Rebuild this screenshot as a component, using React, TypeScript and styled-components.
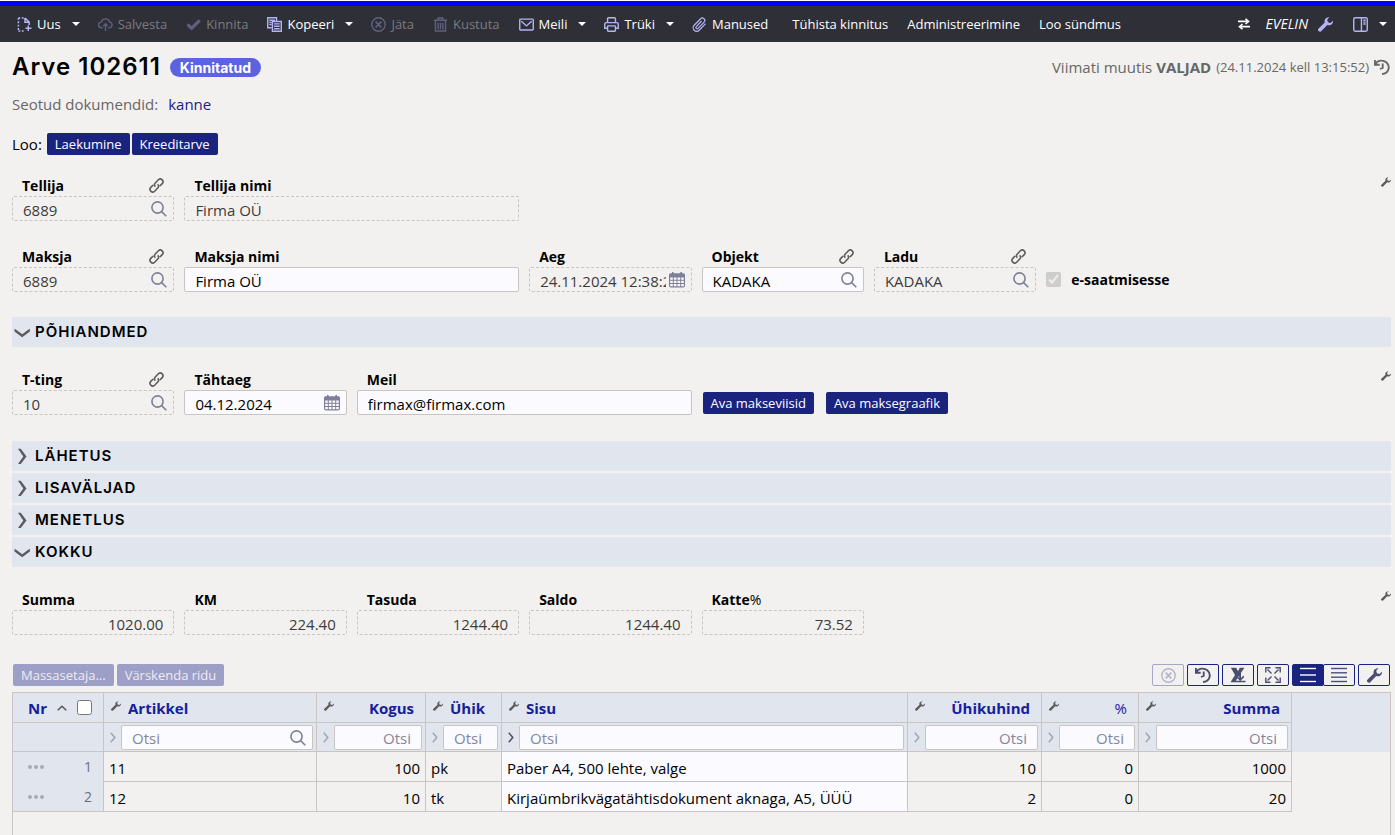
import React, { ReactNode, useId } from 'react';
import styled, { createGlobalStyle, css } from 'styled-components';

const color = {
  page: '#f3f1ef',
  bar: '#2e2f37',
  navy: '#1a237e',
  band: '#e1e5ee',
  line: '#c8c5c3',
  field: '#fbfaff',
  muted: '#676767',
  icon: '#7d8097',
  lilac: '#b3b4f5',
};

const GlobalStyle = createGlobalStyle`
  * { box-sizing: border-box; }
  body {
    margin: 0;
    background: ${color.page};
    color: #000;
    font-family: "Open Sans", "Noto Sans", sans-serif;
    font-size: 15px;
    line-height: 20px;
  }
  button, input { font: inherit; }
  svg { display: block; flex: none; }
`;

/* ---------- icons ---------- */

type IconProps = { size?: number; stroke?: number; children?: ReactNode };

const Glyph = ({ size = 15, stroke = 1.3, children }: IconProps) => (
  <svg
    width={size}
    height={size}
    viewBox="0 0 16 16"
    fill="none"
    stroke="currentColor"
    strokeWidth={stroke}
    aria-hidden="true"
  >
    {children}
  </svg>
);

const NewIcon = () => (
  <Glyph stroke={1.6}>
    <path d="M1.500 1v14M1.500 1h7M1.500 15h6" strokeDasharray="2 1.600" />
    <path d="M8.500 1v4.500H13M8.500 1l4.500 4.500v3M12 9v6M9 12h6.500" />
  </Glyph>
);
const CloudIcon = () => (
  <Glyph stroke={1.5}>
    <path d="M5 11.500H3.800a3 3 0 0 1-.4-6A4.800 4.800 0 0 1 12.600 5.400a3.100 3.100 0 0 1-.3 6.100H11M8 15V7.500M5.500 9.800 8 7.300l2.500 2.500" />
  </Glyph>
);
const CheckIcon = () => (
  <Glyph stroke={3.4}>
    <path d="M1.500 7.800 6 12 14.700 3.500" />
  </Glyph>
);
const CopyIcon = () => (
  <Glyph stroke={1.5}>
    <path d="M5 11.500H.8V.8h9.400v3.400M2.500 3.500h6M2.500 5.700H5M2.500 8H5" />
    <path d="M5.800 4.800h9.400v10.400H5.800zM7.500 7.300h6M7.500 9.900h6M7.500 12.500h6" />
  </Glyph>
);
const CancelIcon = () => (
  <Glyph stroke={1.5}>
    <circle cx="8" cy="8" r="7.200" />
    <path d="m5 5 6 6M11 5l-6 6" strokeWidth="1.900" />
  </Glyph>
);
const TrashIcon = () => (
  <Glyph stroke={1.5}>
    <path d="M1 3.500h14M5.500 3.300V1h5v2.300M2.600 3.800V15h10.800V3.800M5.500 6v7M8 6v7M10.500 6v7" />
  </Glyph>
);
const MailIcon = () => (
  <Glyph stroke={1.5}>
    <rect x=".8" y="2.300" width="14.400" height="11.600" rx=".8" />
    <path d="m2.500 4.500 5.500 5 5.500-5" />
  </Glyph>
);
const PrintIcon = () => (
  <Glyph stroke={1.5}>
    <path d="M3.800 6V1.800q0-1 1-1h6.400q1 0 1 1V6M3.500 12H.8V7.500Q.8 6 2.300 6h11.400q1.500 0 1.500 1.500V12h-2.700" />
    <rect x="3.800" y="9.500" width="8.400" height="5.700" rx=".8" />
  </Glyph>
);
const ClipIcon = () => (
  <Glyph>
    <path d="m10.200 4.300-5.600 5.900a1.300 1.300 0 0 0 1.900 1.900l6.400-6.700a2.500 2.500 0 0 0-3.700-3.500L2.300 8.800a3.700 3.700 0 0 0 5.400 5.300l6.700-7.100" />
  </Glyph>
);
const SwapIcon = () => (
  <Glyph size={12} stroke={2.2}>
    <path d="M0 4.500h13M10 1l4 3.500L10 8M16 11.500H3M6 8l-4 3.500L6 15" />
  </Glyph>
);
const WrenchIcon = ({ size = 15 }: { size?: number }) => (
  <svg width={size} height={size} viewBox="0 0 16 16" fill="currentColor" aria-hidden="true">
    <path d="M12.200 0 10 .6a4.300 4.300 0 0 0-2.800 5.300L.6 12.200a1.900 1.900 0 0 0 0 2.700 2 2 0 0 0 2.800.2l6.500-6.600a4.400 4.400 0 0 0 6.100-4.600l-2.700 2.400-2.700-.8-.8-2.600z" />
  </svg>
);
const PanelIcon = () => (
  <Glyph stroke={1.5}>
    <rect x=".8" y=".8" width="14.400" height="14.400" rx="1.500" />
    <path d="M9 1v14M11 3.500h2.500M11 5.500h2.500M11 7.500h2.500" />
  </Glyph>
);
const HistoryIcon = ({ size = 16 }: { size?: number }) => (
  <Glyph size={size} stroke={1.9}>
    <path d="M.9 1v4.800h4.800M1.200 5.300C3.500 1 9 .6 12.300 3.300c4.500 4 2.500 11.500-4.300 11.700M8.700 4.500v4.300L6 10" />
  </Glyph>
);
const LinkIcon = () => (
  <Glyph stroke={1.7}>
    <path d="M6.700 9.300a2.900 2.900 0 0 1 0-4l3.300-3.400a2.900 2.900 0 0 1 4.100 4.100L11.600 8.600M9.300 6.700a2.900 2.900 0 0 1 0 4L6 14.100A2.900 2.900 0 0 1 1.900 10l2.500-2.600" />
  </Glyph>
);
const SearchIcon = () => (
  <Glyph size={16} stroke={1.6}>
    <circle cx="6.500" cy="6.500" r="5.600" />
    <path d="m10.600 10.600 4.700 4.700" />
  </Glyph>
);
const CalendarIcon = () => (
  <svg width="16" height="16" viewBox="0 0 16 16" aria-hidden="true">
    <path fill="currentColor" d="M3 0h1.600v1.300h6.800V0H13v1.300h1.500Q16 1.300 16 2.800v11q0 1.700-1.700 1.700H1.700Q0 15.500 0 13.800v-11q0-1.500 1.500-1.500H3z" />
    <path
      fill={color.field}
      d="M1.200 5.500h2.600v2.300H1.200zM4.800 5.500h2.700v2.300H4.800zM8.500 5.500h2.700v2.300H8.500zM12.200 5.500h2.600v2.300h-2.600zM1.200 8.700h2.600v2.300H1.200zM4.800 8.700h2.700v2.300H4.800zM8.500 8.700h2.700v2.300H8.500zM12.200 8.700h2.600v2.300h-2.600zM1.200 12h2.600v2.300H1.200zM4.800 12h2.700v2.300H4.800zM8.500 12h2.700v2.300H8.500zM12.200 12h2.600v2.300h-2.600z"
    />
  </svg>
);
const ExcelIcon = () => (
  <svg width="16" height="16" viewBox="0 0 16 16" fill="currentColor" aria-hidden="true">
    <path d="M.8.8h5.400L8 4.200 9.800.8h4.700L10.800 6v4.500L8.800 9l-3 4.700H7v1.500H.5L5 8z" />
    <path d="M9.300 6h1.700v5l2.200-2.200 1.200 1.200-4.200 4.100-3.400-3.300 1.200-1.200 1.300 1.300zM7 13.800h8.500v1.500H7z" />
  </svg>
);
const ExpandIcon = () => (
  <Glyph size={16} stroke={1.4}>
    <path d="M.8 5.500V.8h4.700M10.500.8h4.700v4.700M15.200 10.500v4.700h-4.700M5.500 15.200H.8v-4.700M2.500 2.500l4 4M13.500 2.500l-4 4M13.500 13.500l-4-4M2.500 13.500l4-4" />
  </Glyph>
);
const RowsIcon = ({ lines }: { lines: number[] }) => (
  <Glyph size={16} stroke={1.4}>
    {lines.map((y) => (
      <path key={y} d={`M0 ${y}h16`} />
    ))}
  </Glyph>
);
const CaretDown = () => (
  <svg width="8" height="4" viewBox="0 0 8 4" fill="currentColor" aria-hidden="true">
    <path d="M0 0h8L4 4z" />
  </svg>
);
const SortUp = () => (
  <svg width="10" height="6" viewBox="0 0 10 6" fill="none" stroke="#555" strokeWidth="1.500" aria-hidden="true">
    <path d="m.7 5.300 4.300-4 4.300 4" />
  </svg>
);
const FoldIcon = ({ open }: { open: boolean }) => (
  <svg width="16" height="16" viewBox="0 0 16 16" fill="#5a5a60" aria-hidden="true">
    {open ? (
      <path d="M.5 4.800 2.900 6.300 8.200 10.200l5.300-3.900 2.400-1.500v2.800L8.200 13.300.5 7.600z" />
    ) : (
      <path d="M4 .8h2.800L12.500 8.500l-5.700 7.500H4L9.300 8.500z" />
    )}
  </svg>
);
const SmallChevron = () => (
  <svg width="6" height="11" viewBox="0 0 6 11" fill="none" stroke="currentColor" strokeWidth="1.600" aria-hidden="true">
    <path d="M.8.7 4.800 5.500.8 10.300" />
  </svg>
);
const DotsIcon = () => (
  <svg width="16" height="4" viewBox="0 0 16 4" fill="#a9abb8" aria-hidden="true">
    <circle cx="2" cy="2" r="2" />
    <circle cx="8" cy="2" r="2" />
    <circle cx="14" cy="2" r="2" />
  </svg>
);

/* ---------- top bar ---------- */

const Page = styled.div`
  min-height: 100vh;
  display: flex;
  flex-direction: column;
  border-top: 1px solid #fff;
`;

const TopBar = styled.header`
  display: flex;
  justify-content: space-between;
  height: 41px;
  padding-left: 7px;
  border-top: 5px solid #00f;
  background: ${color.bar};
`;

const Menu = styled.nav`
  display: flex;
`;

const MenuButton = styled.button`
  display: flex;
  align-items: center;
  gap: 5px;
  padding: 0 9px 0 10px;
  border: 0;
  background: none;
  color: #fff;
  font-size: 13px;
  white-space: nowrap;

  svg { color: ${color.lilac}; }
  &:disabled { color: #7b7c80; }
  &:disabled svg { color: #5f607f; }
`;

const CaretButton = styled(MenuButton)`
  padding: 0 8px 0 2px;
  svg { color: #fff; }
`;

const SwapButton = styled(MenuButton)`
  padding: 0 7px;
  svg { color: #fff; }
`;

const UserButton = styled(MenuButton)`
  gap: 10px;
  padding: 0 10px 0 8px;
  font-size: 14px;
  font-style: italic;
`;

const TextMenu = styled.div`
  display: flex;
  margin-left: 5px;
`;

/* ---------- document heading ---------- */

const Content = styled.main`
  flex: 1;
  display: flex;
  flex-direction: column;
  padding: 0 4px 0 12px;
`;

const TitleRow = styled.div`
  display: flex;
  align-items: center;
  justify-content: space-between;
  height: 50px;
`;

const TitleGroup = styled.div`
  display: flex;
  align-items: center;
  gap: 9px;
`;

const Title = styled.h1`
  margin: 0;
  font: 600 24px/30px Inter, sans-serif;
  letter-spacing: 1px;
`;

const Badge = styled.span`
  padding: 0 10px;
  border-radius: 10px;
  background: #5c63e2;
  color: #fff;
  font: 700 14px/19px Inter, sans-serif;
`;

const Changed = styled.div`
  display: flex;
  align-items: center;
  gap: 5px;
  padding-right: 1px;
  color: ${color.muted};
`;

const Stamp = styled.span`
  font-size: 13px;
`;

const Related = styled.p`
  display: flex;
  gap: 10px;
  margin: 0;
  color: ${color.muted};
  line-height: 24px;

  a { color: ${color.navy}; text-decoration: none; }
`;

const CreateRow = styled.div`
  display: flex;
  align-items: center;
  gap: 2px;
  margin: 16px 0 19px;
  height: 23px;

  > span { margin-right: 3px; }
`;

const Action = styled.button`
  height: 22px;
  padding: 0 8px;
  border: 0;
  border-radius: 2px;
  background: ${color.navy};
  color: #fff;
  font-size: 13px;
  line-height: 22px;
  white-space: nowrap;

  &:disabled { background: #9e9fc6; color: #ececf4; }
`;

/* ---------- fields ---------- */

const Block = styled.section<{ $first?: boolean }>`
  display: flex;
  align-items: flex-start;
  padding: ${(p) => (p.$first ? '0 0 25px' : '21px 0 26px')};
`;

const FieldGrid = styled.div`
  flex: 1;
  display: grid;
  grid-template-columns: repeat(8, minmax(0, 1fr));
  gap: 24px 10px;
`;

const Tool = styled.button`
  display: flex;
  width: 10px;
  padding: 3px 0;
  border: 0;
  background: none;
  color: #5c5c5c;
`;

const FieldCell = styled.div<{ $span: number; $newLine?: boolean }>`
  grid-column: ${(p) => (p.$newLine ? '1 /' : '')} span ${(p) => p.$span};
`;

const FieldHead = styled.div`
  display: flex;
  align-items: center;
  justify-content: space-between;
  height: 22px;
  padding: 0 10px;
  color: #5c5c5c;

  label {
    padding-top: 2px;
    color: #000;
    font-size: 14px;
    font-weight: 700;
  }
  label span { font-weight: 400; }
`;

const boxed = css`
  width: 100%;
  height: 25px;
  padding: 2px 10px 0;
  border: 1px solid ${color.line};
  border-radius: 2px;
  background: ${color.field};
  color: #000;
  outline: 0;
`;

const InputWrap = styled.div`
  position: relative;
  flex: 1;
  min-width: 0;
  display: flex;

  > svg {
    position: absolute;
    right: 7px;
    top: 5px;
    color: ${color.icon};
  }
`;

const TextInput = styled.input<{ $right?: boolean; $icon?: boolean }>`
  ${boxed}
  text-align: ${(p) => (p.$right ? 'right' : 'left')};
  ${(p) => p.$icon && 'padding-right: 25px;'}

  &:read-only {
    border-style: dashed;
    background: transparent;
    color: #3c3c3c;
  }
  &::placeholder { color: #84869a; opacity: 1; }
`;

const CheckCell = styled.label`
  display: flex;
  align-items: center;
  gap: 10px;
  align-self: end;
  height: 25px;
  font-size: 14px;
  font-weight: 700;

  input { width: 15px; height: 15px; margin: 0; }
`;

const ActionCell = styled.div`
  display: flex;
  align-items: flex-end;
  gap: 12px;
  padding: 0 0 1px 1px;
  grid-column: span 3;
`;

type FieldProps = {
  label: ReactNode;
  value: string;
  span?: number;
  linked?: boolean;
  locked?: boolean;
  right?: boolean;
  newLine?: boolean;
  icon?: ReactNode;
};

const Field = ({ label, value, span = 1, linked, locked, right, newLine, icon }: FieldProps) => {
  const id = useId();
  return (
    <FieldCell $span={span} $newLine={newLine}>
      <FieldHead>
        <label htmlFor={id}>{label}</label>
        {linked && <LinkIcon />}
      </FieldHead>
      <InputWrap>
        <TextInput id={id} defaultValue={value} readOnly={locked} $right={right} $icon={!!icon} />
        {icon}
      </InputWrap>
    </FieldCell>
  );
};

/* ---------- sections ---------- */

const SectionList = styled.div`
  display: flex;
  flex-direction: column;
  gap: 2px;
`;

const SectionButton = styled.button`
  display: flex;
  align-items: center;
  gap: 5px;
  width: 100%;
  height: 30px;
  padding: 0 2px;
  border: 0;
  border-radius: 2px;
  background: ${color.band};
  color: #000;
  font: 600 15px/30px Inter, sans-serif;
  letter-spacing: 1px;
  text-transform: uppercase;
`;

const Section = ({ title, open = false }: { title: string; open?: boolean }) => (
  <SectionButton aria-expanded={open}>
    <FoldIcon open={open} />
    {title}
  </SectionButton>
);

/* ---------- rows grid ---------- */

const GridBar = styled.div`
  display: flex;
  justify-content: space-between;
  margin: 3px 0 6px;
  padding: 0 1px;
`;

const ButtonRun = styled.div`
  display: flex;
  gap: 3px;
`;

const IconButton = styled.button<{ $active?: boolean }>`
  display: grid;
  place-items: center;
  width: 32px;
  height: 22px;
  padding: 0;
  border: 1px solid ${color.navy};
  border-radius: 2px;
  background: ${(p) => (p.$active ? color.navy : 'transparent')};
  color: ${(p) => (p.$active ? '#fff' : '#4b4e72')};

  &:disabled { border-color: #a5a6cb; color: #b4b5c8; }
`;

const Toggle = styled.div`
  display: flex;
  ${IconButton} + ${IconButton} { margin-left: -1px; }
`;

const Frame = styled.div`
  flex: 1;
  border: 1px solid ${color.line};
  border-bottom: 0;
`;

const Table = styled.table`
  width: 100%;
  table-layout: fixed;
  border-collapse: separate;
  border-spacing: 0;
`;

const HeadCell = styled.th`
  height: 30px;
  padding: 0;
  border-right: 1px solid ${color.line};
  border-bottom: 1px solid ${color.line};
  background: ${color.band};
  color: #16209b;
  font-weight: 700;
`;

const FilterCell = styled(HeadCell)`
  height: 29px;
  font-weight: 400;
`;

const Filler = styled.td`
  padding: 0;
  background: ${color.band};
`;

const HeadLine = styled.div<{ $right?: boolean; $light?: boolean }>`
  display: flex;
  align-items: center;
  justify-content: ${(p) => (p.$right ? 'space-between' : 'flex-start')};
  gap: 7px;
  padding: 0 11px 0 7px;
  font-weight: ${(p) => (p.$light ? 400 : 700)};
  svg { color: #5c5c5c; margin-bottom: 3px; }
`;

const NumberHead = styled.div`
  display: flex;
  align-items: center;
  gap: 10px;
  padding-left: 15px;
  input { width: 15px; height: 15px; margin: 0; }
`;

const FilterLine = styled.div<{ $dark?: boolean }>`
  display: flex;
  align-items: center;
  gap: 5px;
  padding: 0 3px 0 6px;
  > svg { color: ${(p) => (p.$dark ? '#55565e' : '#a4a7b3')}; }
`;

const Cell = styled.td<{ $right?: boolean; $open?: boolean }>`
  height: 30px;
  padding: 3px 5px 0;
  border-right: 1px solid ${color.line};
  border-bottom: 1px solid ${color.line};
  background: ${(p) => (p.$open ? color.field : 'transparent')};
  text-align: ${(p) => (p.$right ? 'right' : 'left')};
  white-space: nowrap;
`;

const RowHead = styled.th<{ $last?: boolean }>`
  padding: 0 11px 0 15px;
  border-right: 1px solid ${color.line};
  border-bottom: ${(p) => (p.$last ? `1px solid ${color.line}` : '0')};
  background: ${color.band};
  color: #6f7076;
  font-size: 14px;
  font-weight: 400;

  div { display: flex; align-items: center; justify-content: space-between; }
`;

type Column = { name: string; width: number; right?: boolean; search?: boolean; open?: boolean };

const columns: Column[] = [
  { name: 'Artikkel', width: 213, search: true },
  { name: 'Kogus', width: 109, right: true },
  { name: 'Ühik', width: 76 },
  { name: 'Sisu', width: 406, open: true },
  { name: 'Ühikuhind', width: 134, right: true },
  { name: '%', width: 97, right: true },
  { name: 'Summa', width: 153, right: true },
];

const rows = [
  ['11', '100', 'pk', 'Paber A4, 500 lehte, valge', '10', '0', '1000'],
  ['12', '10', 'tk', 'Kirjaümbrikvägatähtisdokument aknaga, A5, ÜÜÜ', '2', '0', '20'],
];

const RowsTable = () => (
  <Table>
    <colgroup>
      <col width={91} />
      {columns.map((c) => (
        <col key={c.name} width={c.width} />
      ))}
      <col />
    </colgroup>
    <thead>
      <tr>
        <HeadCell>
          <NumberHead>
            Nr
            <SortUp />
            <input type="checkbox" aria-label="Vali kõik" />
          </NumberHead>
        </HeadCell>
        {columns.map((c) => (
          <HeadCell key={c.name}>
            <HeadLine $right={c.right} $light={c.name === '%'}>
              <WrenchIcon size={10} />
              {c.name}
            </HeadLine>
          </HeadCell>
        ))}
        <Filler />
      </tr>
      <tr>
        <FilterCell />
        {columns.map((c) => (
          <FilterCell key={c.name}>
            <FilterLine $dark={c.open}>
              <SmallChevron />
              <InputWrap>
                <TextInput placeholder="Otsi" aria-label={c.name} $right={c.right} $icon={c.search} />
                {c.search && <SearchIcon />}
              </InputWrap>
            </FilterLine>
          </FilterCell>
        ))}
        <Filler />
      </tr>
    </thead>
    <tbody>
      {rows.map((row, r) => (
        <tr key={row[0]}>
          <RowHead $last={r === rows.length - 1}>
            <div>
              <DotsIcon />
              {r + 1}
            </div>
          </RowHead>
          {row.map((text, i) => (
            <Cell key={columns[i].name} $right={columns[i].right} $open={columns[i].open}>
              {text}
            </Cell>
          ))}
        </tr>
      ))}
    </tbody>
  </Table>
);

const Caret = ({ label }: { label: string }) => (
  <CaretButton aria-label={label}>
    <CaretDown />
  </CaretButton>
);

export default function App() {
  return (
    <Page>
      <GlobalStyle />
      <TopBar>
        <Menu>
          <MenuButton><NewIcon />Uus</MenuButton>
          <Caret label="Uus valikud" />
          <MenuButton disabled><CloudIcon />Salvesta</MenuButton>
          <MenuButton disabled><CheckIcon />Kinnita</MenuButton>
          <MenuButton><CopyIcon />Kopeeri</MenuButton>
          <Caret label="Kopeeri valikud" />
          <MenuButton disabled><CancelIcon />Jäta</MenuButton>
          <MenuButton disabled><TrashIcon />Kustuta</MenuButton>
          <MenuButton><MailIcon />Meili</MenuButton>
          <Caret label="Meili valikud" />
          <MenuButton><PrintIcon />Trüki</MenuButton>
          <Caret label="Trüki valikud" />
          <MenuButton><ClipIcon />Manused</MenuButton>
          <TextMenu>
            <MenuButton>Tühista kinnitus</MenuButton>
            <MenuButton>Administreerimine</MenuButton>
            <MenuButton>Loo sündmus</MenuButton>
          </TextMenu>
        </Menu>
        <Menu aria-label="Kasutaja">
          <SwapButton aria-label="Vaheta"><SwapIcon /></SwapButton>
          <UserButton>EVELIN<WrenchIcon /></UserButton>
          <MenuButton aria-label="Paneel"><PanelIcon /></MenuButton>
          <Caret label="Paneeli valikud" />
        </Menu>
      </TopBar>

      <Content>
        <TitleRow>
          <TitleGroup>
            <Title>Arve 102611</Title>
            <Badge>Kinnitatud</Badge>
          </TitleGroup>
          <Changed>
            <span>Viimati muutis <b>VALJAD</b></span>
            <Stamp>(24.11.2024 kell 13:15:52)</Stamp>
            <HistoryIcon />
          </Changed>
        </TitleRow>
        <Related>
          Seotud dokumendid: <a href="#kanne">kanne</a>
        </Related>
        <CreateRow>
          <span>Loo:</span>
          <Action>Laekumine</Action>
          <Action>Kreeditarve</Action>
        </CreateRow>

        <Block $first>
          <FieldGrid>
            <Field label="Tellija" value="6889" linked locked icon={<SearchIcon />} />
            <Field label="Tellija nimi" value="Firma OÜ" span={2} locked />
            <Field label="Maksja" value="6889" newLine linked locked icon={<SearchIcon />} />
            <Field label="Maksja nimi" value="Firma OÜ" span={2} />
            <Field label="Aeg" value="24.11.2024 12:38:23" locked icon={<CalendarIcon />} />
            <Field label="Objekt" value="KADAKA" linked icon={<SearchIcon />} />
            <Field label="Ladu" value="KADAKA" linked locked icon={<SearchIcon />} />
            <CheckCell>
              <input type="checkbox" defaultChecked disabled />
              e-saatmisesse
            </CheckCell>
          </FieldGrid>
          <Tool aria-label="Seadista päis"><WrenchIcon size={10} /></Tool>
        </Block>

        <Section title="Põhiandmed" open />
        <Block>
          <FieldGrid>
            <Field label="T-ting" value="10" linked locked icon={<SearchIcon />} />
            <Field label="Tähtaeg" value="04.12.2024" icon={<CalendarIcon />} />
            <Field label="Meil" value="firmax@firmax.com" span={2} />
            <ActionCell>
              <Action>Ava makseviisid</Action>
              <Action>Ava maksegraafik</Action>
            </ActionCell>
          </FieldGrid>
          <Tool aria-label="Seadista põhiandmed"><WrenchIcon size={10} /></Tool>
        </Block>

        <SectionList>
          <Section title="Lähetus" />
          <Section title="Lisaväljad" />
          <Section title="Menetlus" />
          <Section title="Kokku" open />
        </SectionList>
        <Block>
          <FieldGrid>
            <Field label="Summa" value="1020.00" locked right />
            <Field label="KM" value="224.40" locked right />
            <Field label="Tasuda" value="1244.40" locked right />
            <Field label="Saldo" value="1244.40" locked right />
            <Field label={<>Katte<span>%</span></>} value="73.52" locked right />
          </FieldGrid>
          <Tool aria-label="Seadista kokku"><WrenchIcon size={10} /></Tool>
        </Block>

        <GridBar>
          <ButtonRun>
            <Action disabled>Massasetaja...</Action>
            <Action disabled>Värskenda ridu</Action>
          </ButtonRun>
          <ButtonRun>
            <IconButton disabled aria-label="Tühjenda"><CancelIcon /></IconButton>
            <IconButton aria-label="Ajalugu"><HistoryIcon /></IconButton>
            <IconButton aria-label="Excel"><ExcelIcon /></IconButton>
            <IconButton aria-label="Täisekraan"><ExpandIcon /></IconButton>
            <Toggle>
              <IconButton $active aria-label="Hõre"><RowsIcon lines={[1.5, 8, 14.5]} /></IconButton>
              <IconButton aria-label="Tihe"><RowsIcon lines={[1.5, 5.8, 10.2, 14.5]} /></IconButton>
            </Toggle>
            <IconButton aria-label="Seadista tabel"><WrenchIcon /></IconButton>
          </ButtonRun>
        </GridBar>
        <Frame>
          <RowsTable />
        </Frame>
      </Content>
    </Page>
  );
}
